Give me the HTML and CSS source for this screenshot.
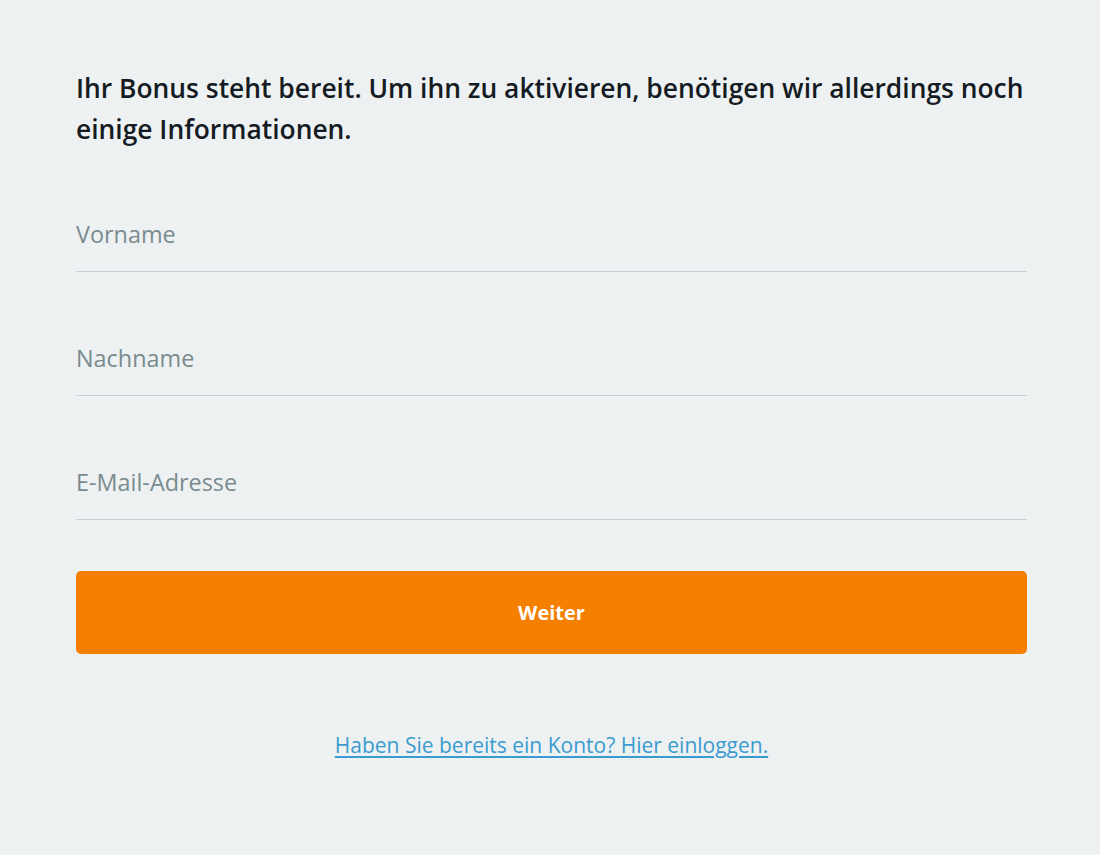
FILE: index.html
```html
<!DOCTYPE html>
<html lang="de">
<head>
<meta charset="utf-8">
<title>Bonus</title>
<link rel="stylesheet" href="styles.css">
</head>
<body>
<main class="page">
  <h1 class="intro">Ihr Bonus steht bereit. Um ihn zu aktivieren, benötigen wir allerdings noch einige Informationen.</h1>
  <form class="form">
    <label class="field"><input class="input" type="text" placeholder="Vorname"></label>
    <label class="field"><input class="input" type="text" placeholder="Nachname"></label>
    <label class="field"><input class="input" type="email" placeholder="E-Mail-Adresse"></label>
    <button class="submit" type="button">Weiter</button>
  </form>
  <p class="login"><a href="#" class="login-link">Haben Sie bereits ein Konto? Hier einloggen.</a></p>
</main>
</body>
</html>
```
FILE: styles.css
```css
html, body {
  margin: 0;
  padding: 0;
  background: #edf1f2;
}
body {
  font-family: "Open Sans", "Noto Sans", "Liberation Sans", sans-serif;
  color: #141a22;
}
.page {
  padding: 68px 73px 60px 76px;
}
.intro {
  margin: 0;
  font-size: 26.4px;
  line-height: 41px;
  font-weight: 600;
  color: #151b23;
}
.form {
  display: flex;
  flex-direction: column;
  margin-top: 47px;
}
.field {
  display: block;
  border-bottom: 1px solid #c9cfd2;
  margin-bottom: 49px;
}
.field:last-of-type {
  margin-bottom: 51px;
}
.input {
  display: block;
  width: 100%;
  box-sizing: border-box;
  border: 0;
  background: transparent;
  font-family: inherit;
  font-size: 23.4px;
  height: 74px;
  padding: 0;
  color: #141a22;
  outline: none;
}
.input::placeholder {
  color: #7a8b8e;
}
.submit {
  height: 83px;
  border: 0;
  border-radius: 5px;
  background: #f58000;
  color: #fff;
  font-family: inherit;
  font-weight: 700;
  font-size: 20px;
  cursor: pointer;
}
.login {
  margin: 76px 0 0;
  text-align: center;
  font-size: 21px;
  line-height: 30px;
}
.login-link {
  color: #3a9bd0;
  text-decoration: underline;
  text-underline-offset: 3px;
}
```
